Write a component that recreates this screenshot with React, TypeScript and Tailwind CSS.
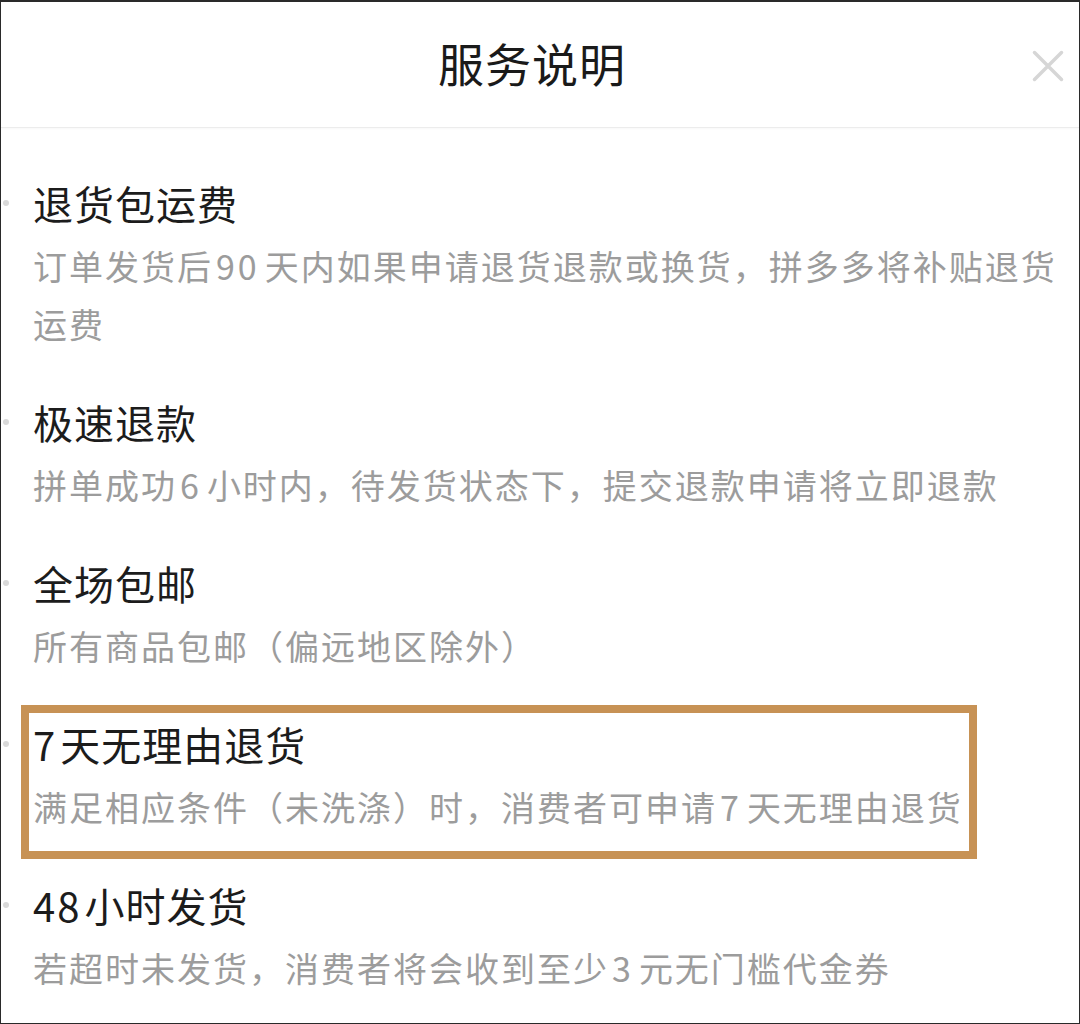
const items = [
  {
    title: ['退货包运费'],
    desc: ['订单发货后', { n: '90' }, '天内如果申请退货退款或换货，拼多多将补贴退货', { br: true }, '运费'],
  },
  {
    title: ['极速退款'],
    desc: ['拼单成功', { n: '6' }, '小时内，待发货状态下，提交退款申请将立即退款'],
  },
  {
    title: ['全场包邮'],
    desc: ['所有商品包邮（偏远地区除外）'],
  },
  {
    title: [{ n: '7' }, '天无理由退货'],
    desc: ['满足相应条件（未洗涤）时，消费者可申请', { n: '7' }, '天无理由退货'],
    highlight: true,
  },
  {
    title: [{ n: '48' }, '小时发货'],
    desc: ['若超时未发货，消费者将会收到至少', { n: '3' }, '元无门槛代金券'],
  },
];

type Part = string | { n: string } | { br: true };

// digits sit a little apart from the CJK text around them
function Text({ parts, numClass }: { parts: Part[]; numClass: string }) {
  return (
    <>
      {parts.map((p, i) => {
        if (typeof p === 'string') return <span key={i}>{p}</span>;
        if ('br' in p) return <br key={i} />;
        return (
          <span key={i} className={numClass}>
            {p.n}
          </span>
        );
      })}
    </>
  );
}

function CloseIcon() {
  return (
    <svg width="32" height="32" viewBox="0 0 32 32" fill="none">
      <path
        d="M2.5 2.5 L29.5 29.5 M29.5 2.5 L2.5 29.5"
        stroke="#d6d6d6"
        strokeWidth="3.5"
        strokeLinecap="round"
      />
    </svg>
  );
}

export default function App() {
  return (
    <div
      className="w-[1080px] h-[1024px] bg-white border border-t-2 border-[#2a2a2a] overflow-hidden flex flex-col"
      style={{ fontFamily: '"Noto Sans CJK SC", "Noto Sans", sans-serif' }}
    >
      <div className="h-[126px] shrink-0 grid grid-cols-[1fr_auto_1fr] items-center border-b border-[#ececec] shadow-[0_1px_2px_rgba(0,0,0,0.03)]">
        <div />
        <h1 className="pr-[16px] pb-[6px] text-[46px] leading-none tracking-[1px] text-[#1a1a1a] font-normal">
          服务说明
        </h1>
        <div className="flex justify-end pr-[15px] pt-[2px]">
          <CloseIcon />
        </div>
      </div>

      <div className="flex flex-col gap-[39px] pt-[45px]">
        {items.map((item, idx) => (
          <div key={idx} className="relative">
            <div className="flex items-center h-[60px]">
              <span className="ml-[2px] mr-[24px] w-[6px] h-[6px] rounded-full bg-[#d9d9d9] shrink-0" />
              <span className="text-[40px] leading-[60px] tracking-[1px] text-[#1c1c1c] whitespace-nowrap">
                <Text parts={item.title} numClass="tracking-[2px] mr-[3px]" />
              </span>
            </div>
            <p className="mt-[4px] pl-[32px] pr-[10px] text-[34px] leading-[58px] tracking-[2px] text-[#9c9c9c] whitespace-nowrap">
              <Text parts={item.desc} numClass="tracking-[3px] ml-[3px] mr-[5px]" />
            </p>
            {item.highlight && (
              <div className="pointer-events-none absolute left-[20px] -top-[9px] -bottom-[23px] w-[956px] border-[8px] border-[#c79255]" />
            )}
          </div>
        ))}
      </div>
    </div>
  );
}
